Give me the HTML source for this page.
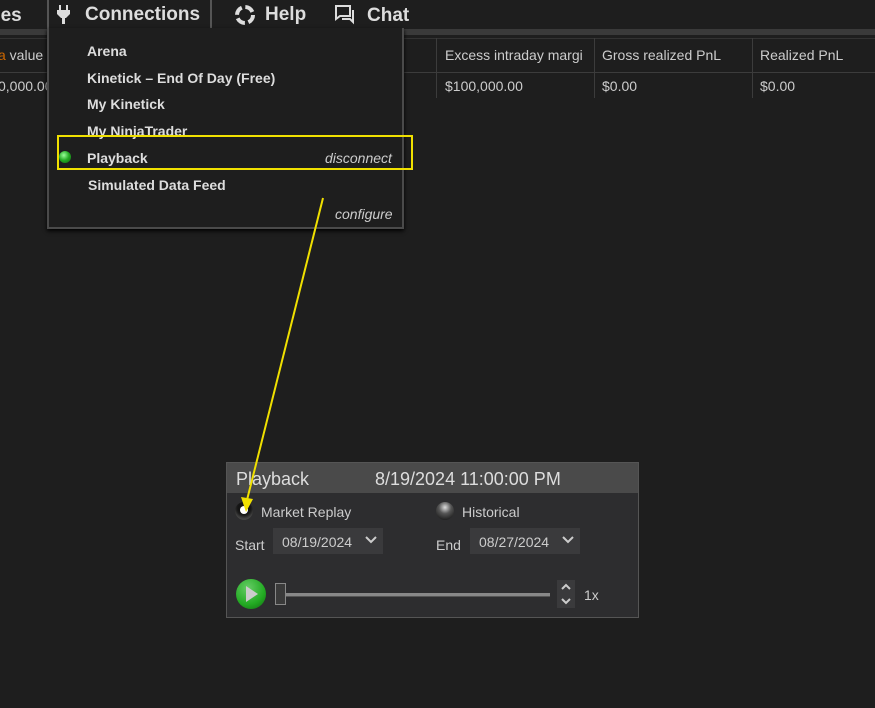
<!DOCTYPE html>
<html><head><style>
*{margin:0;padding:0;box-sizing:border-box}
body{width:875px;height:708px;background:#1e1e1e;font-family:"Liberation Sans",sans-serif;position:relative;overflow:hidden;color:#ddd}
.a{position:absolute;white-space:nowrap}
.mb{font-weight:bold;font-size:19px;color:#ddd}
.mi{font-weight:bold;font-size:14px;color:#ddd;left:87px}
.th{font-size:14px;color:#ccc;top:47px}
.td{font-size:14px;color:#ccc;top:78px}
</style></head><body>
<div class="a" style="left:0;top:29px;width:875px;height:6px;background:#3a3a3a"></div>
<div class="a" style="left:0;top:38px;width:875px;height:1px;background:#333"></div>
<div class="a" style="left:0;top:72px;width:875px;height:1px;background:#3c3c3c"></div>
<div class="a" style="left:436px;top:38px;width:1px;height:60px;background:#3c3c3c"></div>
<div class="a" style="left:594px;top:38px;width:1px;height:60px;background:#3c3c3c"></div>
<div class="a" style="left:752px;top:38px;width:1px;height:60px;background:#3c3c3c"></div>
<div class="a th" style="left:-2px"><span style="color:#c60">a</span> value</div>
<div class="a td" style="left:-2px">0,000.00</div>
<div class="a th" style="left:445px">Excess intraday margi</div>
<div class="a th" style="left:602px">Gross realized PnL</div>
<div class="a th" style="left:760px">Realized PnL</div>
<div class="a td" style="left:445px">$100,000.00</div>
<div class="a td" style="left:602px">$0.00</div>
<div class="a td" style="left:760px">$0.00</div>
<div class="a mb" style="left:-10px;top:5px">ces</div>
<div class="a" style="left:47px;top:0;width:165px;height:30px;background:#1e1e1e;border:2px solid #555;border-top:none;border-bottom:none"></div>
<svg class="a" style="left:57px;top:5px" width="16" height="20"><rect x="2" y="0" width="2" height="5" fill="#ddd"/><rect x="9" y="0" width="2" height="5" fill="#ddd"/><path d="M0 5H13V9L9 13H4L0 9Z" fill="#ddd"/><rect x="5" y="12" width="3" height="7" fill="#ddd"/></svg>
<div class="a mb" style="left:85px;top:4px">Connections</div>
<svg class="a" style="left:234px;top:4px" width="22" height="22"><circle cx="11" cy="11" r="8" fill="none" stroke="#ddd" stroke-width="4" stroke-dasharray="9 3.6"/></svg>
<div class="a mb" style="left:265px;top:4px">Help</div>
<svg class="a" style="left:335px;top:5px" width="22" height="20"><path d="M1 1H15V11H5L1 14Z" fill="none" stroke="#ddd" stroke-width="2"/><path d="M18 5V17L15 14H7" fill="none" stroke="#ddd" stroke-width="2"/></svg>
<div class="a mb" style="left:367px;top:5px">Chat</div>
<div class="a" style="left:47px;top:28px;width:357px;height:201px;background:#1e1e1e;border:2px solid #4a4a4a;border-top:none;box-shadow:0 2px 4px #000"></div>
<div class="a mi" style="top:43px">Arena</div>
<div class="a mi" style="top:70px">Kinetick – End Of Day (Free)</div>
<div class="a mi" style="top:96px">My Kinetick</div>
<div class="a mi" style="top:123px">My NinjaTrader</div>
<div class="a" style="left:57px;top:135px;width:356px;height:35px;border:2px solid #f0e000"></div>
<div class="a" style="left:59px;top:151px;width:12px;height:12px;border-radius:50%;background:radial-gradient(circle at 40% 35%,#9f9,#2a2 50%,#161 100%)"></div>
<div class="a mi" style="top:150px">Playback</div>
<div class="a" style="left:325px;top:150px;font-size:14px;font-style:italic;color:#ccc">disconnect</div>
<div class="a mi" style="top:177px;left:88px">Simulated Data Feed</div>
<div class="a" style="left:335px;top:206px;font-size:14px;font-style:italic;color:#ccc">configure</div>
<div class="a" style="left:226px;top:462px;width:413px;height:156px;background:#2d2d2f;border:1px solid #555"></div>
<div class="a" style="left:227px;top:463px;width:411px;height:30px;background:#4a4a4a"></div>
<div class="a" style="left:236px;top:469px;font-size:18px;color:#ddd">Playback</div>
<div class="a" style="left:375px;top:469px;font-size:18px;color:#ddd">8/19/2024 11:00:00 PM</div>
<div class="a" style="left:235px;top:502px;width:18px;height:18px;border-radius:50%;background:#141414;box-shadow:inset 0 -3px 3px #4a4a4a"></div>
<div class="a" style="left:240px;top:506px;width:8px;height:8px;border-radius:50%;background:#fff"></div>
<div class="a" style="left:261px;top:504px;font-size:14px;color:#ccc">Market Replay</div>
<div class="a" style="left:436px;top:502px;width:18px;height:18px;border-radius:50%;background:radial-gradient(circle at 50% 30%,#ddd,#555 40%,#222 80%)"></div>
<div class="a" style="left:462px;top:504px;font-size:14px;color:#ccc">Historical</div>
<div class="a" style="left:235px;top:537px;font-size:14px;color:#ccc">Start</div>
<div class="a" style="left:273px;top:528px;width:110px;height:26px;background:#3a3a3c"></div>
<div class="a" style="left:282px;top:534px;font-size:14px;color:#ccc">08/19/2024</div>
<svg class="a" style="left:365px;top:535px" width="12" height="10"><path d="M1 2L6 7L11 2" fill="none" stroke="#ccc" stroke-width="2"/></svg>
<div class="a" style="left:436px;top:537px;font-size:14px;color:#ccc">End</div>
<div class="a" style="left:470px;top:528px;width:110px;height:26px;background:#3a3a3c"></div>
<div class="a" style="left:479px;top:534px;font-size:14px;color:#ccc">08/27/2024</div>
<svg class="a" style="left:562px;top:535px" width="12" height="10"><path d="M1 2L6 7L11 2" fill="none" stroke="#ccc" stroke-width="2"/></svg>
<div class="a" style="left:236px;top:579px;width:30px;height:30px;border-radius:50%;background:radial-gradient(circle at 40% 30%,#6c6,#2a2 60%,#161)"></div>
<svg class="a" style="left:244px;top:585px" width="16" height="18"><path d="M2 1L14 9L2 17Z" fill="#ccc"/></svg>
<div class="a" style="left:276px;top:593px;width:274px;height:4px;background:#888;border-bottom:1px solid #555"></div>
<div class="a" style="left:275px;top:583px;width:11px;height:22px;background:#3a3a3a;border:1px solid #888"></div>
<div class="a" style="left:557px;top:580px;width:18px;height:28px;background:#3a3a3c"></div>
<svg class="a" style="left:560px;top:583px" width="12" height="22"><path d="M2 6L6 2L10 6M2 16L6 20L10 16" fill="none" stroke="#ccc" stroke-width="2"/></svg>
<div class="a" style="left:584px;top:587px;font-size:14px;color:#ccc">1x</div>
<svg class="a" style="left:0;top:0" width="875" height="708"><line x1="323" y1="198" x2="247" y2="500" stroke="#f0e000" stroke-width="2"/><path d="M241 497L246 512L253 499Z" fill="#f0e000"/></svg>
</body></html>
